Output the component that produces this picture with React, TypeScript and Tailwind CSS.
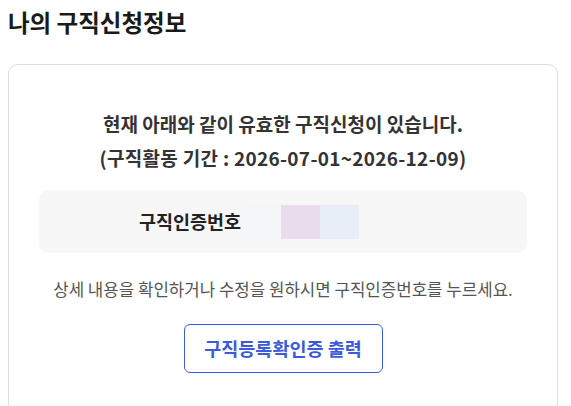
import React from "react";

export default function App() {
  return (
    <div
      className="bg-white min-h-[406px] pl-[8px] pr-[13px]"
      style={{ fontFamily: '"Noto Sans CJK KR", "Noto Sans", sans-serif' }}
    >
      <h2 className="text-[23.5px] leading-[45px] font-bold text-[#1a1a1a]">
        나의 구직신청정보
      </h2>
      <div className="mt-[19px] border border-[#dddddd] rounded-[10px] px-[30px] pt-[42px] pb-[40px]">
        <div className="text-center text-[19px] leading-[34px] font-bold text-[#333333]">
          <p>현재 아래와 같이 유효한 구직신청이 있습니다.</p>
          <p className="tracking-[0.3px]">(구직활동 기간 : 2026-07-01~2026-12-09)</p>
        </div>
        <div className="mt-[15px] h-[63px] bg-[#f7f7f7] rounded-[10px] flex items-center pl-[100px]">
          <span className="text-[18.5px] font-bold text-[#222222] leading-none">구직인증번호</span>
          <div className="flex ml-[1px]">
            <span className="w-[39px] h-[34px] bg-[#f4f6f8]" />
            <span className="w-[39px] h-[34px] bg-[#e9dced]" />
            <span className="w-[39px] h-[34px] bg-[#e7eef8]" />
          </div>
        </div>
        <p className="mt-[24px] text-center text-[16.8px] leading-[24px] text-[#555555]">
          상세 내용을 확인하거나 수정을 원하시면 구직인증번호를 누르세요.
        </p>
        <div className="mt-[23px] flex justify-center">
          <button className="w-[199px] h-[49px] border border-[#3d5bd9] rounded-[6px] bg-white text-[18.5px] font-bold text-[#3d5bd9]">
            구직등록확인증 출력
          </button>
        </div>
      </div>
    </div>
  );
}
